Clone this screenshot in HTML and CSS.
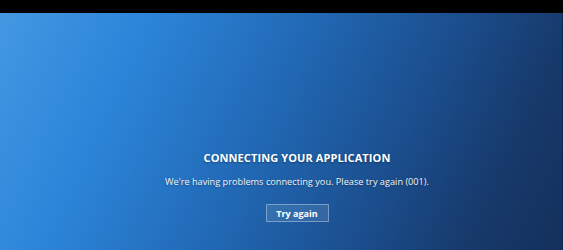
FILE: index.html
```html
<!DOCTYPE html>
<html lang="en">
<head>
    <meta charset="UTF-8">
    <meta name="viewport" content="width=device-width, initial-scale=1.0">
    <title>Connecting</title>
    <link rel="stylesheet" href="styles.css">
</head>
<body>
    <div class="top-bar"></div>
    <div class="stage">
        <div class="message">
            <h1 class="title">Connecting your application</h1>
            <p class="text">We're having problems connecting you. Please try again (001).</p>
            <button class="retry">Try again</button>
        </div>
    </div>
</body>
</html>
```

FILE: styles.css
```css
/* General styling */
body {
    margin: 0;
    padding: 0;
    height: 250px;
    display: flex;
    flex-direction: column;
    font-family: "Open Sans", "Noto Sans", sans-serif;
    background: #000;
    overflow: hidden;
}

.top-bar {
    height: 13px;
    background: #000;
}

/* Gradient area */
.stage {
    flex: 1;
    display: flex;
    justify-content: center;
    padding-left: 32px;
    border-right: 1px solid #102850;
    background: linear-gradient(115deg, #4498e2 0%, #2c85d9 22%, #226bb8 45%, #1b4f8f 68%, #173a6c 85%, #14305b 100%);
}

.message {
    padding-top: 137px;
    display: flex;
    flex-direction: column;
    align-items: center;
    color: #fff;
}

.title {
    margin: 0;
    font-size: 11px;
    font-weight: 700;
    text-transform: uppercase;
    letter-spacing: 0.1px;
    line-height: 15px;
    text-shadow: 0 1px 2px rgba(0,0,0,0.35);
}

.text {
    margin: 10px 0 0;
    font-size: 9.2px;
    line-height: 14px;
    color: #f0f3f8;
    text-shadow: 0 1px 2px rgba(0,0,0,0.3);
}

.retry {
    margin-top: 15px;
    width: 63px;
    height: 18px;
    padding: 0;
    font-family: inherit;
    font-size: 9px;
    font-weight: 700;
    color: #fff;
    background: rgba(255,255,255,0.1);
    border: 1px solid rgba(255,255,255,0.35);
    border-radius: 1px;
    cursor: pointer;
}
```
